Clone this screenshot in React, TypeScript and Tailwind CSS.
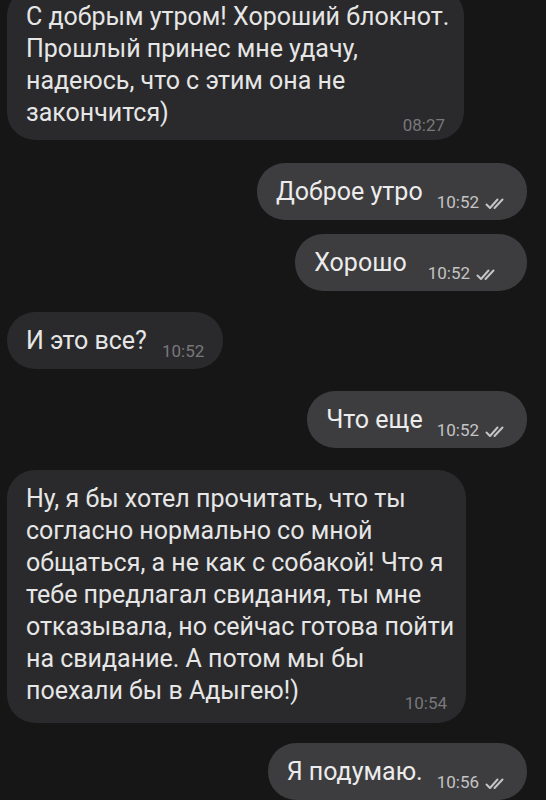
function Checks() {
  return (
    <svg width="22" height="14" viewBox="0 0 22 14" fill="none" stroke="#c4c4c4" strokeWidth="2" strokeLinecap="round" strokeLinejoin="round" className="shrink-0">
      <path d="M1.5 7.5 L5 11 L12.5 2.5" />
      <path d="M9.5 11 L17.5 2.5" />
    </svg>
  )
}

function Incoming({ text, time, className }: { text: string; time: string; className?: string }) {
  return (
    <div className={"self-start flex items-end rounded-[28px] bg-[#2a2a2c] pl-[19px] pr-[19px] pt-[13px] pb-[12px] " + (className ?? "")}>
      <span className="text-[25px] leading-[32px] text-[#e6e6e6]">{text}</span>
      <span className="ml-[15px] mb-[-4px] text-[17px] leading-[20px] text-[#78787a]">{time}</span>
    </div>
  )
}

function Outgoing({ text, time, className, wide }: { text: string; time: string; className?: string; wide?: boolean }) {
  return (
    <div className={"self-end flex items-end rounded-[28px] bg-[#3d3d3f] pl-[19px] pt-[13px] pb-[12px] " + (wide ? "pr-[29px] " : "pr-[20px] ") + (className ?? "")}>
      <span className="text-[25px] leading-[32px] text-[#ececec]">{text}</span>
      <span className={(wide ? "ml-[21px] " : "ml-[14px] ") + "mb-[-4px] text-[17px] leading-[20px] text-[#c4c4c4]"}>{time}</span>
      <span className="ml-[6px] mb-[-3px]">
        <Checks />
      </span>
    </div>
  )
}

function Long({ lines, time, className }: { lines: string[]; time: string; className?: string }) {
  return (
    <div className={"self-start rounded-[28px] bg-[#2a2a2c] pl-[19px] pr-[18px] " + (className ?? "")}>
      <p className="text-[25px] leading-[32px] text-[#e6e6e6] whitespace-nowrap">
        {lines.map((l, i) => (
          <span key={i} className="block">{l}</span>
        ))}
      </p>
      <div className="flex justify-end -mt-[14px] pr-[1px]">
        <span className="text-[17px] leading-[20px] text-[#78787a]">{time}</span>
      </div>
    </div>
  )
}

export default function App() {
  return (
    <div className="min-h-[800px] h-[800px] overflow-hidden bg-[#161617] font-['Roboto',sans-serif]">
      <div className="flex flex-col pl-[7px] pr-[19px]">
        <Long
          className="-mt-[12px] pt-[13px] pb-[5px] w-[457px]"
          lines={[
            "С добрым утром! Хороший блокнот.",
            "Прошлый принес мне удачу,",
            "надеюсь, что с этим она не",
            "закончится)",
          ]}
          time="08:27"
        />
        <Outgoing className="mt-[23px]" text="Доброе утро" time="10:52" />
        <Outgoing className="mt-[14px]" text="Хорошо" time="10:52" wide />
        <Incoming className="mt-[21px]" text="И это все?" time="10:52" />
        <Outgoing className="mt-[22px]" text="Что еще" time="10:52" />
        <Long
          className="mt-[22px] pt-[13px] pb-[10px] w-[459px]"
          lines={[
            "Ну, я бы хотел прочитать, что ты",
            "согласно нормально со мной",
            "общаться, а не как с собакой! Что я",
            "тебе предлагал свидания, ты мне",
            "отказывала, но сейчас готова пойти",
            "на свидание. А потом мы бы",
            "поехали бы в Адыгею!)",
          ]}
          time="10:54"
        />
        <Outgoing className="mt-[20px]" text="Я подумаю." time="10:56" />
      </div>
    </div>
  )
}
